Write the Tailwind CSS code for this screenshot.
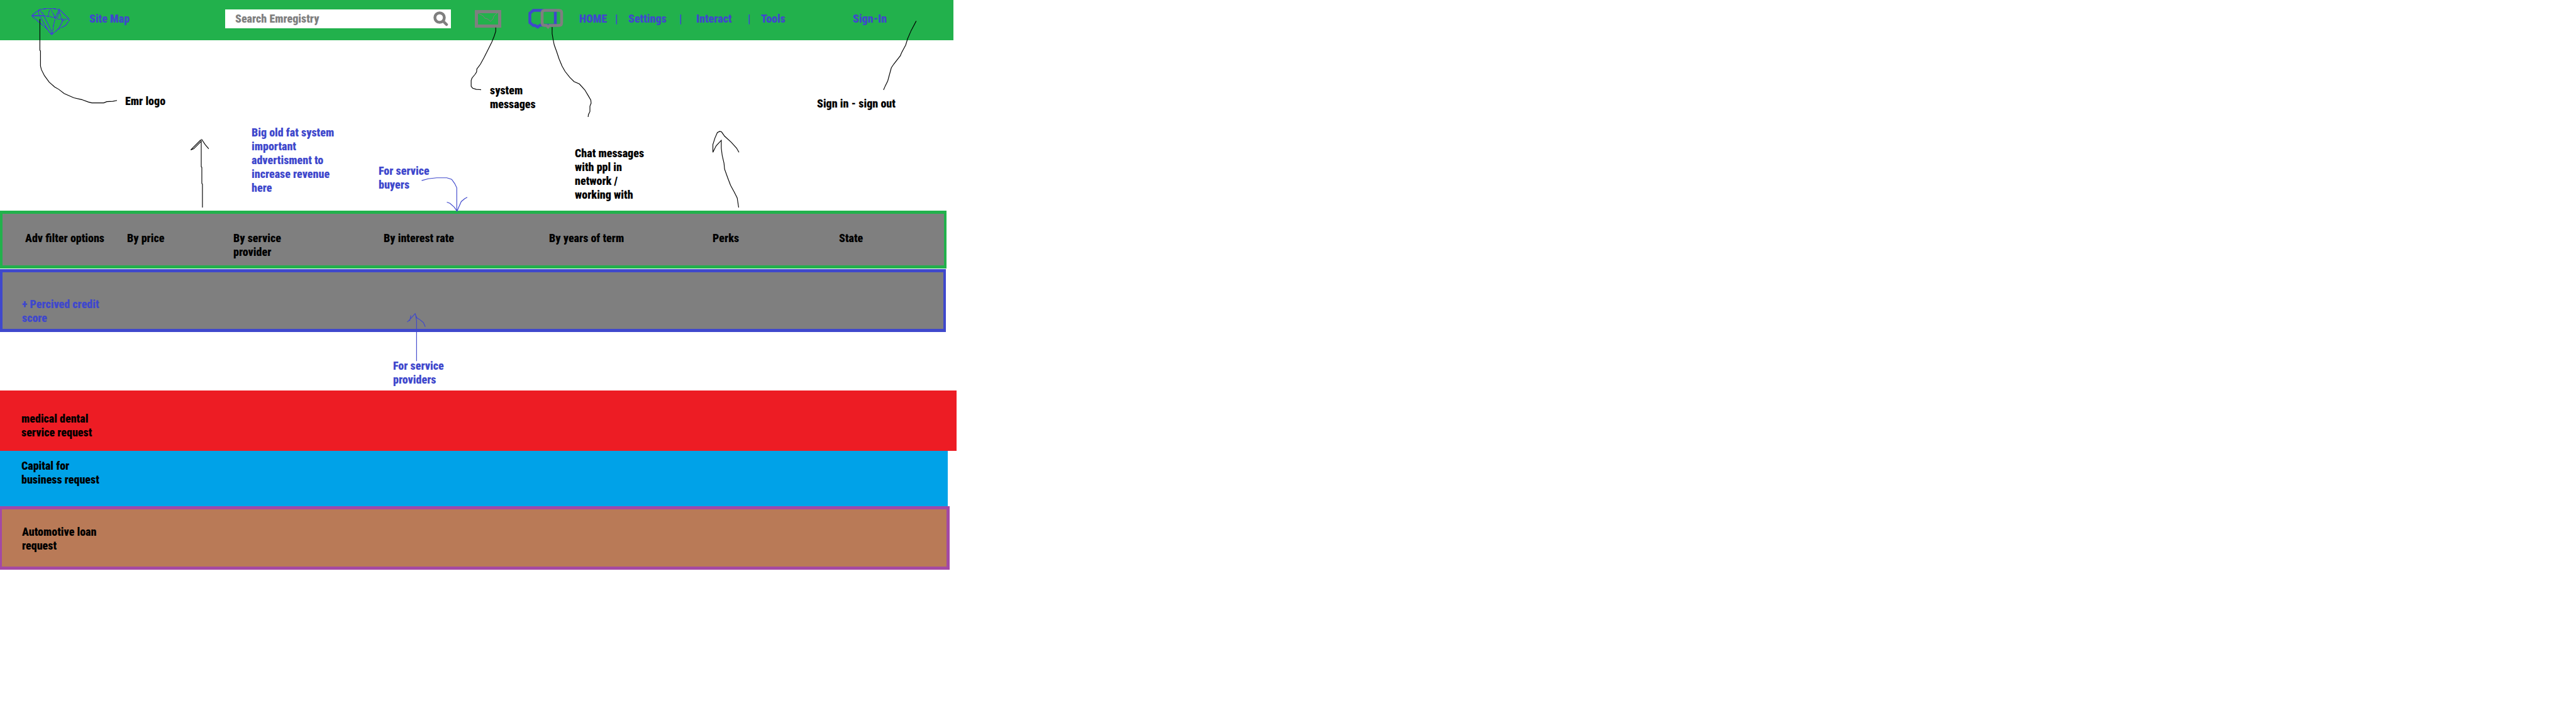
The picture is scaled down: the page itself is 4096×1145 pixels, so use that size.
<!DOCTYPE html>
<html lang="en">
<head>
<meta charset="utf-8">
<title>Emregistry</title>
<script src="https://cdn.jsdelivr.net/npm/@tailwindcss/browser@4"></script>
</head>
<body class="relative min-h-screen bg-white font-['Roboto_Condensed','Roboto',sans-serif] text-[18px] leading-[22px] font-black text-black">

<header class="grid h-16 w-[37%] grid-cols-[92px_216px_397px_85px_81px_57px_21px_81px_27px_82px_21px_146px_auto] items-center bg-[#22b14c] pb-1 pl-[50px] whitespace-nowrap text-[#3f48cc]">
  <a href="#" aria-label="Emregistry home" class="pt-2">
    <svg class="h-[44px] w-[62px]" viewBox="52 12 65 46" fill="none" stroke="#3f48cc" stroke-width="1.3" shape-rendering="crispEdges">
      <path d="M52 25.500 66.500 14.500 83 13.500 98 14.500 109 25 115.500 32.500 109 42 97 47.500 86 57 75 45 62 34Z"/>
      <path d="M52 25.500H73L92 29 96 31.500H115M66 15 63.500 19 65 25 78 47 85 57M73 26 80 40 85 51 86 57M66 16 74 26M80 27 82 15M84 14 88 22 92 29 97 17 99 15M98 16 101 27 104 34 100 42 97 48M92 29 89 40 88 48 86 57M73 26H80M102 34 108 33M95 30 98 18"/>
    </svg>
  </a>
  <a href="#">Site Map</a>
  <form class="flex h-[30px] w-[359px] items-center bg-white pr-1 pl-4">
    <input type="search" aria-label="Search Emregistry" placeholder="Search Emregistry" class="min-w-0 flex-1 text-[#7f7f7f] outline-none placeholder:text-[#7f7f7f]">
    <button type="button" aria-label="Search">
      <svg class="h-6 w-6" viewBox="0 0 24 24" fill="none" stroke="#7f7f7f"><circle cx="10" cy="10" r="7.500" stroke-width="4.500"/><path d="m16 16 5 5" stroke-width="4.500" stroke-linecap="round"/></svg>
    </button>
  </form>
  <a href="#" aria-label="System messages">
    <svg class="h-7 w-[42px]" viewBox="0 0 42 28" fill="none" stroke="#7f7f7f"><path d="M2.500 2.500h37v23h-37z" stroke-width="5"/><path d="m5 5 8 4 3 4 4 1 5 4 4-4 1-4 6-6" stroke-width="1"/></svg>
  </a>
  <a href="#" aria-label="Chat messages">
    <svg class="h-8 w-14" viewBox="0 0 56 32" fill="none" stroke-width="4.500">
      <path d="M8 2.500H43V26H19l-4 3-4-2.500H8L2.500 22V7Z" stroke="#3f48cc"/>
      <path d="M26 2.500h23q4 0 4 4v16q0 4-4 4H34l-2.500 2.500-2.500-2.500H26q-4 0-4-4v-16q0-4 4-4Z" stroke="#7f7f7f"/>
    </svg>
  </a>
  <a href="#">HOME</a>
  <span>|</span>
  <a href="#">Settings</a>
  <span>|</span>
  <a href="#">Interact</a>
  <span>|</span>
  <a href="#">Tools</a>
  <a href="#">Sign-In</a>
</header>

<!-- Notes pinned on the free area under the header -->
<section class="relative h-[271px]">
  <p class="absolute top-[86px] left-[199px]">Emr logo</p>
  <p class="absolute top-[69px] left-[779px]">system<br>messages</p>
  <p class="absolute top-[136px] left-[400px] text-[#3f48cc]">Big old fat system<br>important<br>advertisment to<br>increase revenue<br>here</p>
  <p class="absolute top-[197px] left-[602px] text-[#3f48cc]">For service<br>buyers</p>
  <p class="absolute top-[169px] left-[914px]">Chat messages<br>with ppl in<br>network /<br>working with</p>
  <p class="absolute top-[90px] left-[1299px]">Sign in - sign out</p>
</section>

<main>
  <section class="grid h-[92px] w-[36.75%] grid-cols-[162px_169px_239px_263px_260px_201px_auto] border-x-4 border-y-[5px] border-[#22b14c] bg-[#7f7f7f] pt-7 pl-9 whitespace-nowrap">
    <p>Adv filter options</p>
    <p>By price</p>
    <p>By service<br>provider</p>
    <p>By interest rate</p>
    <p>By years of term</p>
    <p>Perks</p>
    <p>State</p>
  </section>
  <section class="mt-px h-[100px] w-[36.73%] border-x-4 border-y-[5px] border-[#3f48cc] bg-[#7f7f7f] pt-10 pl-[31px] text-[#3f48cc]">
    <p>+ Percived credit<br>score</p>
  </section>

  <div class="relative h-[93px]">
    <p class="absolute top-[43px] left-[625px] text-[#3f48cc]">For service<br>providers</p>
  </div>

  <section class="h-24 w-[37.13%] bg-[#ed1c24] pt-[34px] pl-[34px]">
    <p>medical dental<br>service request</p>
  </section>
  <section class="h-[88px] w-[36.78%] bg-[#00a2e8] pt-[13px] pl-[34px]">
    <p>Capital for<br>business request</p>
  </section>
  <section class="h-[101px] w-[36.87%] border-y-[5px] border-r-[5px] border-l-[3px] border-[#a349a4] bg-[#b97a57] pt-[25px] pl-8">
    <p>Automotive loan<br>request</p>
  </section>
</main>

<!-- Hand-drawn leader lines and arrows -->
<svg class="pointer-events-none absolute top-0 left-0 h-[668px] w-[1526px]" viewBox="0 0 1600 700" preserveAspectRatio="xMinYMin" fill="none" stroke="#000" stroke-width="1.200" aria-hidden="true">
  <path d="M66.500 32V84L67.500 85V110L69 116 74 126 82 137 91 145 98 149 107 156 123 163 136 166 147 170 153 171.500H173L178 169.500 188 169 195 167.500"/>
  <path d="M337.500 346V307L336.500 306V279L335.500 278V234M318 250 335 233M318 250 323 248 335 236M336 232 342 241 348 248"/>
  <path d="M826.500 46V52L824 60 820 70 814 82 807 96 801 107 795 115 794.500 120 792 124 787 130 785.500 134V144L788 147 794 149 802 149.500"/>
  <path d="M920.500 45V56L922 65 924 75 928 86 932 98 937 110 942 119 950 129 957 136 966 140 975 150 981 160 985 167 985.500 172 983.500 177V186L981 191 980.500 195"/>
  <path d="M1527.500 35 1519 51 1513 65 1510 75 1503 88 1501 93 1490 107 1486 113 1483 124 1480 135 1476 143 1473 150"/>
  <path d="M1231.500 346 1229 330 1224 320 1218 309 1213 296 1208 282 1207 272 1204 259 1202.500 247V234L1194 243 1189 253 1188.500 254V241L1192 230 1196 221 1200 219 1203 220 1208 227 1219 237 1228 247 1232 254"/>
  <g stroke="#3f48cc">
    <path d="M703 301 714 298 728 296.500H745L753 299 758 306 761.500 313V352M745 337 750 339 757 345 762 352 765 345 769 336 775 331 779 329"/>
    <path d="M694.500 602V535L692.500 523M679 537 685 531 692 523 695 530 700 533 706 538 709 545M685 526 683 535"/>
  </g>
</svg>
</body>
</html>
